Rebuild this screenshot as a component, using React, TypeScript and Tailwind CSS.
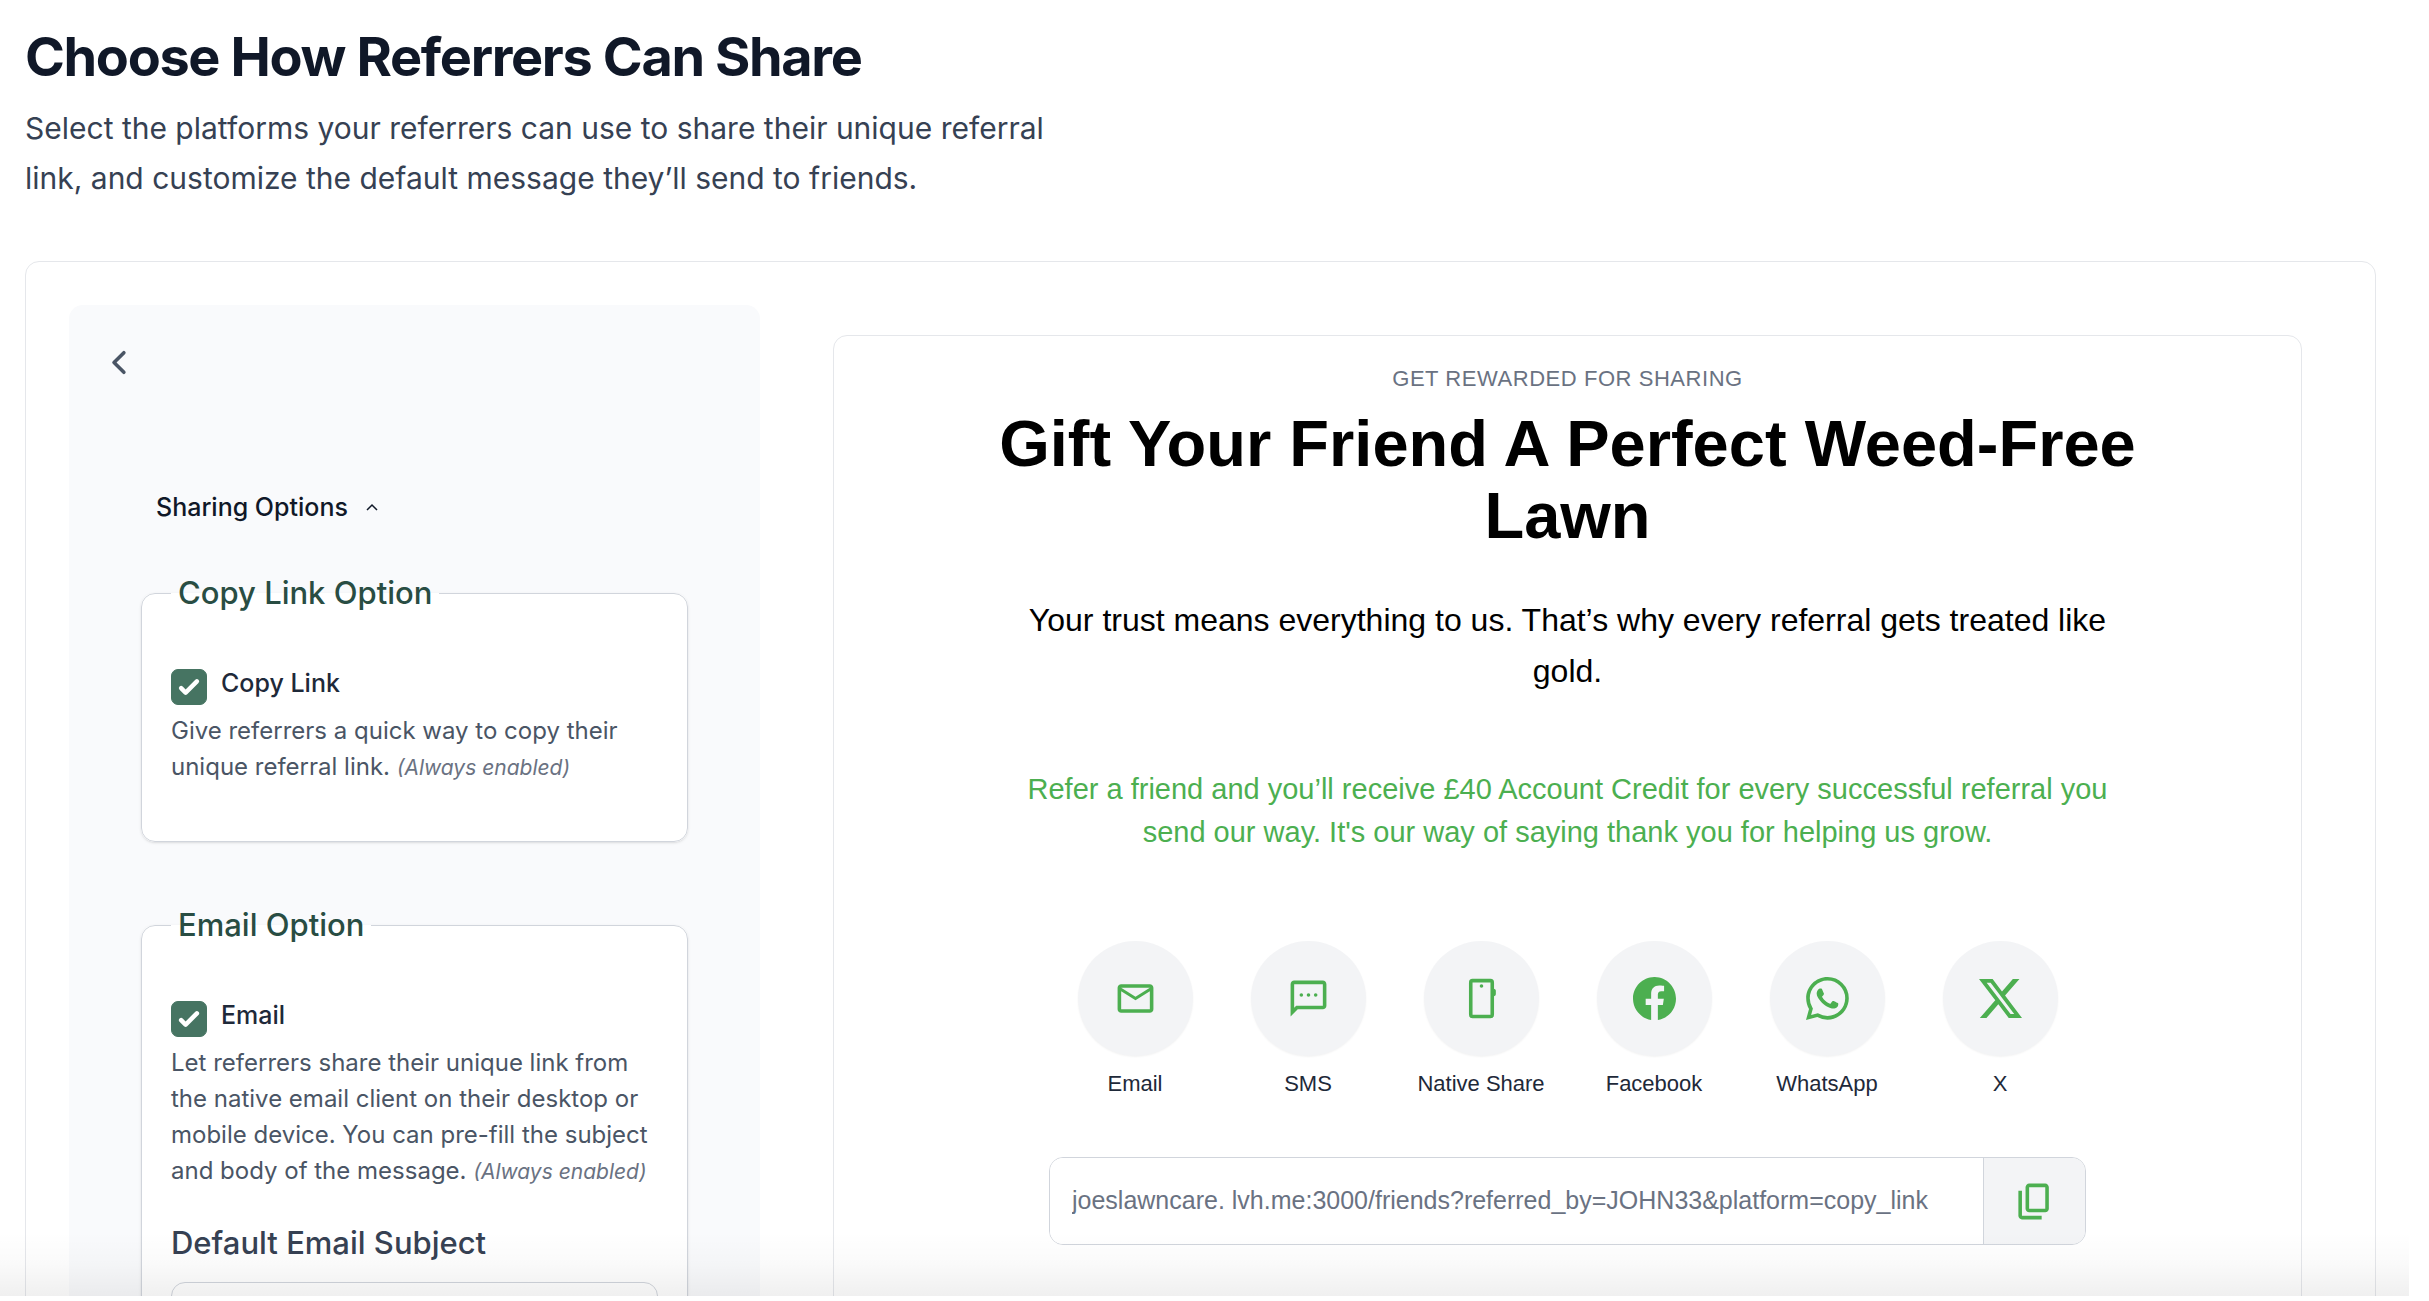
import type { ReactNode } from "react";
import { BsFacebook, BsTwitterX, BsWhatsapp } from "react-icons/bs";
import { MdOutlineEmail } from "react-icons/md";

function SmsIcon() {
  return (
    <svg viewBox="0 0 24 24" className="size-[43px]" fill="currentColor" aria-hidden="true">
      <path d="M20 2H4c-1.1 0-2 .9-2 2v18l4-4h14c1.1 0 2-.9 2-2V4c0-1.1-.9-2-2-2zm0 14H5.17L4 17.17V4h16v12z" />
      <circle cx="8" cy="10" r="1" />
      <circle cx="12" cy="10" r="1" />
      <circle cx="16" cy="10" r="1" />
    </svg>
  );
}

function PhoneIcon() {
  return (
    <svg viewBox="0 0 24 24" className="size-[43px]" fill="currentColor" aria-hidden="true">
      <path fillRule="evenodd" d="M7 1h10a2 2 0 0 1 2 2v3.5q1 .2 1 1.100v2q0 .9-1 1.100V21a2 2 0 0 1-2 2H7a2 2 0 0 1-2-2V3a2 2 0 0 1 2-2zM7 3v18h10V3z" />
      <circle cx="12" cy="5" r="1" />
    </svg>
  );
}

function CopyIcon() {
  return (
    <svg viewBox="0 -960 960 960" className="size-[43px]" fill="currentColor" aria-hidden="true">
      <path d="M360-240q-33 0-56.5-23.5T280-320v-480q0-33 23.5-56.5T360-880h360q33 0 56.5 23.5T800-800v480q0 33-23.5 56.5T720-240H360Zm0-80h360v-480H360v480ZM200-80q-33 0-56.5-23.5T120-160v-560h80v560h440v80H200Z" />
    </svg>
  );
}

function OptionCard({ id, title, label, children, extra }: {
  id: string;
  title: string;
  label: string;
  children: ReactNode;
  extra?: ReactNode;
}) {
  return (
    <fieldset className="min-w-0 rounded-[14px] border border-gray-300 bg-white px-[29px] pb-[55px] shadow-sm">
      <legend className="px-[7px] text-[31px] leading-[50px] font-medium text-[#294d43]">{title}</legend>
      <div className="mt-[50px] flex items-start gap-[14px]">
        <span className="relative mt-px size-9 shrink-0">
          <input
            id={id}
            type="checkbox"
            defaultChecked
            className="peer block size-9 appearance-none rounded-[7px] border border-gray-300 bg-white checked:border-[#467462] checked:bg-[#467462]"
          />
          <svg
            viewBox="0 0 16 16"
            fill="white"
            aria-hidden="true"
            className="pointer-events-none absolute inset-0 hidden size-9 peer-checked:block"
          >
            <path d="M12.207 4.793a1 1 0 0 1 0 1.414l-5 5a1 1 0 0 1-1.414 0l-2-2a1 1 0 0 1 1.414-1.414L6.5 9.086l4.293-4.293a1 1 0 0 1 1.414 0z" />
          </svg>
        </span>
        <label htmlFor={id} className="text-[25px] leading-[30px] font-medium text-gray-800">{label}</label>
      </div>
      <p className="mt-2 text-[24px] leading-9 text-gray-600">
        {children} <em className="text-[21px] text-gray-500">(Always enabled)</em>
      </p>
      {extra}
    </fieldset>
  );
}

const channels: { name: string; icon: ReactNode }[] = [
  { name: "Email", icon: <MdOutlineEmail className="size-[43px]" /> },
  { name: "SMS", icon: <SmsIcon /> },
  { name: "Native Share", icon: <PhoneIcon /> },
  { name: "Facebook", icon: <BsFacebook className="size-[43px]" /> },
  { name: "WhatsApp", icon: <BsWhatsapp className="size-[43px]" /> },
  { name: "X", icon: <BsTwitterX className="size-[43px]" /> },
];

function SettingsPanel() {
  return (
    <aside className="w-[691px] shrink-0 rounded-t-[14px] bg-[#f9fafc] px-[72px] pt-9">
      <button type="button" aria-label="Back" className="-ml-11 flex size-[43px] items-center justify-center text-gray-600">
        <svg viewBox="0 0 24 24" className="size-[43px]" fill="none" stroke="currentColor" strokeWidth="2" strokeLinecap="round" strokeLinejoin="round" aria-hidden="true">
          <path d="M15 6.5 9.5 12l5.5 5.5" />
        </svg>
      </button>
      <button type="button" aria-expanded="true" className="mt-[105px] ml-[15px] flex items-center gap-[18px] text-[25px] leading-9 font-medium text-gray-900">
        Sharing Options
        <svg viewBox="0 0 12 8" className="h-2 w-3" fill="none" stroke="currentColor" strokeWidth="1.5" aria-hidden="true">
          <path d="M1 7l5-5 5 5" />
        </svg>
      </button>
      <div className="mt-[43px] flex flex-col gap-[58px] pb-[43px]">
        <OptionCard id="copy-link" title="Copy Link Option" label="Copy Link">
          Give referrers a quick way to copy their unique referral link.
        </OptionCard>
        <OptionCard
          id="email"
          title="Email Option"
          label="Email"
          extra={
            <div className="mt-7">
              <label htmlFor="subject" className="block text-[31px] leading-[50px] font-medium text-gray-700">Default Email Subject</label>
              <input id="subject" type="text" className="mt-3.5 block h-[72px] w-full rounded-[14px] border border-gray-300 bg-white px-5 text-[25px]" />
            </div>
          }
        >
          Let referrers share their unique link from the native email client on their desktop or mobile device. You can pre-fill the subject and body of the message.
        </OptionCard>
      </div>
    </aside>
  );
}

function Preview() {
  return (
    <section className="mt-[30px] mr-[30px] min-w-0 flex-1 rounded-t-[14px] border border-gray-200 bg-white px-[162px] pt-[29px] text-center font-['Liberation_Sans',Arial,sans-serif]">
      <p className="text-[22px] leading-7 tracking-wide text-gray-500 uppercase">Get rewarded for sharing</p>
      <h2 className="mt-[15px] text-[65px] leading-[72px] font-bold text-black">Gift Your Friend A Perfect Weed-Free Lawn</h2>
      <p className="mt-[43px] text-[32px] leading-[51px] text-black">
        Your trust means everything to us. That’s why every referral gets treated like gold.
      </p>
      <p className="mt-[71px] text-[29px] leading-[43px] text-[#4caf50]">
        Refer a friend and you’ll receive £40 Account Credit for every successful referral you send our way. It's our way of saying thank you for helping us grow.
      </p>
      <ul className="mt-[87px] flex justify-center">
        {channels.map((c) => (
          <li key={c.name} className="w-[173px]">
            <button type="button" className="flex w-full flex-col items-center gap-[14px] whitespace-nowrap">
              <span className="flex size-[115px] items-center justify-center rounded-full bg-gray-100 text-[#4caf50] shadow-xs">
                {c.icon}
              </span>
              <span className="text-[22px] leading-7 text-gray-800">{c.name}</span>
            </button>
          </li>
        ))}
      </ul>
      <div className="mx-auto mt-[59px] mb-24 flex h-[88px] max-w-[1037px] overflow-hidden rounded-[14px] border border-gray-300">
        <input
          type="text"
          readOnly
          aria-label="Referral link"
          value="joeslawncare. lvh.me:3000/friends?referred_by=JOHN33&platform=copy_link"
          className="min-w-0 flex-1 bg-white px-[22px] text-[25px] text-gray-500"
        />
        <button type="button" aria-label="Copy link" className="flex w-[102px] items-center justify-center border-l border-gray-300 bg-gray-100 text-[#4caf50]">
          <CopyIcon />
        </button>
      </div>
    </section>
  );
}

export default function App() {
  return (
    <div className="relative h-screen overflow-hidden bg-white font-[Inter,sans-serif]">
      <header className="px-[25px] pt-6">
        <h1 className="text-[54px] leading-[65px] font-bold tracking-tight text-gray-900">Choose How Referrers Can Share</h1>
        <p className="mt-3.5 max-w-[1060px] text-[30px] leading-[50px] text-gray-700">
          Select the platforms your referrers can use to share their unique referral link, and customize the default message they’ll send to friends.
        </p>
      </header>
      <main className="mt-[58px] mr-[53px] ml-[25px] flex gap-[73px] rounded-t-[14px] border border-gray-200 px-[43px] pt-[43px]">
        <SettingsPanel />
        <Preview />
      </main>
      <div className="pointer-events-none absolute inset-x-0 bottom-0">
        <div className="mr-5 h-16 bg-linear-to-b from-transparent via-black/2 to-black/6" />
        <div className="h-[5px] bg-white" />
      </div>
    </div>
  );
}
